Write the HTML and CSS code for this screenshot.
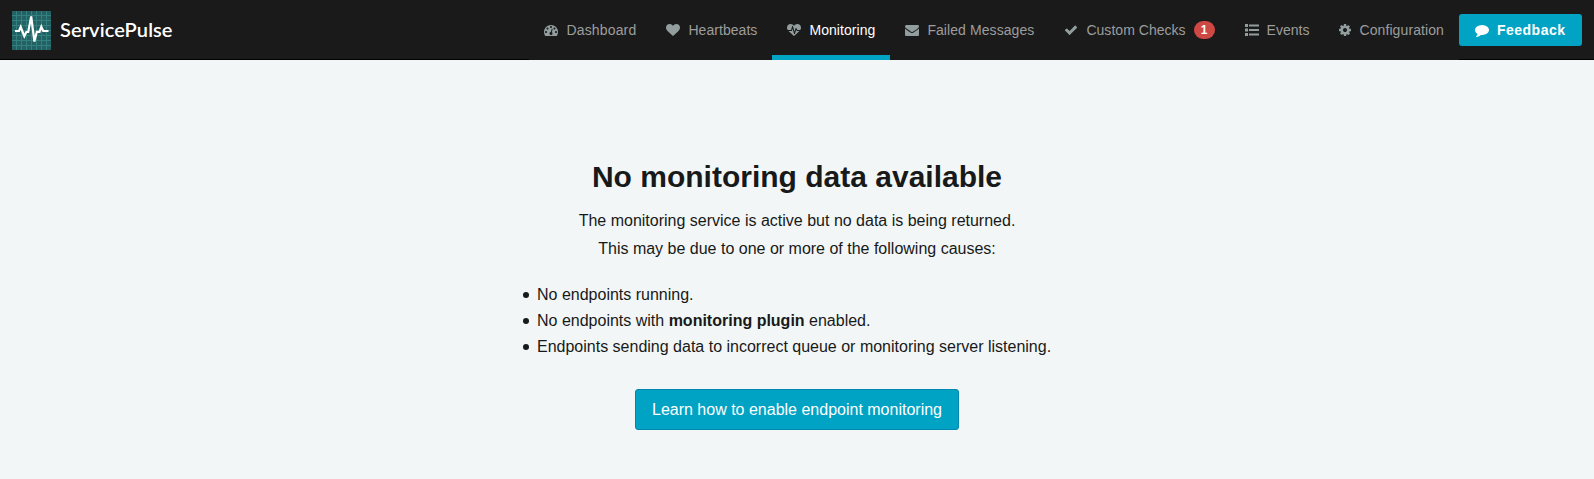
FILE: index.html
```html
<!DOCTYPE html>
<html lang="en">
<head>
<meta charset="utf-8">
<title>ServicePulse</title>
<link rel="stylesheet" href="styles.css">
</head>
<body>
<header class="navbar">
  <a class="brand">
    <svg class="logo" viewBox="0 0 39 39">
      <rect width="39" height="39" fill="#236164"/>
      <path d="M4.500 0V39M9.500 0V39M14.500 0V39M19.500 0V39M24.500 0V39M29.500 0V39M34.500 0V39M0 4.500H39M0 9.500H39M0 14.500H39M0 19.500H39M0 24.500H39M0 29.500H39M0 34.500H39" stroke="#33817f" stroke-width="1"/>
      <path d="M3 20H7L8.700 16L12.300 25.200L14.300 21H16.200L19.200 5.500L22.400 30.500L24.800 20.800H27.500L29.300 15.700L31.200 20H36.500" fill="none" stroke="#fff" stroke-width="2.200"/>
    </svg>
    <span class="brand-name">ServicePulse</span>
  </a>
  <nav class="menu">
    <a class="item dashboard"><svg class="icon" viewBox="0 0 1792 1792"><path d="M384 1152q0-53-37.500-90.500t-90.500-37.500-90.500 37.500-37.500 90.500 37.500 90.500 90.500 37.500 90.500-37.500 37.500-90.500zm192-448q0-53-37.500-90.500t-90.500-37.500-90.500 37.500-37.500 90.500 37.500 90.500 90.500 37.500 90.500-37.500 37.500-90.500zm428 481l101-382q6-26-7.500-48.500t-38.500-29.500-48 6.500-30 39.500l-101 382q-60 5-107 43.500t-63 98.500q-20 77 20 146t117 89 146-20 89-117q16-60-6-117t-72-91zm660-33q0-53-37.500-90.500t-90.500-37.500-90.500 37.500-37.500 90.500 37.500 90.500 90.500 37.500 90.500-37.500 37.500-90.500zm-640-640q0-53-37.500-90.500t-90.500-37.500-90.500 37.500-37.500 90.500 37.500 90.500 90.500 37.500 90.500-37.500 37.500-90.500zm448 192q0-53-37.500-90.500t-90.500-37.500-90.500 37.500-37.500 90.500 37.500 90.500 90.500 37.500 90.500-37.500 37.500-90.500zm320 448q0 261-141 483-19 29-54 29h-1402q-35 0-54-29-141-221-141-483 0-182 71-348t191-286 286-191 348-71 348 71 286 191 191 286 71 348z"/></svg>Dashboard</a>
    <a class="item heartbeats"><svg class="icon" viewBox="0 0 1792 1792"><path d="M896 1664q-26 0-44-18l-624-602q-10-8-27.500-26t-55.500-65.500-68-97.500-53.500-121-23.500-138q0-220 127-344t351-124q62 0 126.500 21.500t120 58 95.500 68.500 76 68q36-36 76-68t95.500-68.500 120-58 126.500-21.500q224 0 351 124t127 344q0 221-229 450l-623 600q-18 18-44 18z"/></svg>Heartbeats</a>
    <a class="item active monitoring"><svg class="icon" viewBox="0 0 1792 1792"><path d="M1280 1024h305q-5 6-10 10.500t-9 7.500l-3 4-623 600q-18 18-44 18t-44-18l-624-602q-5-2-21-20h369q22 0 39.500-13.500t22.500-34.500l70-281 190 667q6 20 23 33t39 13q21 0 38-13t23-33l146-485 56 112q18 35 57 35zm512-428q0 145-103 300h-369l-111-221q-8-17-25.500-27t-36.500-8q-45 5-56 46l-129 430-196-686q-6-20-23.500-33t-39.500-13-39 13.500-22 34.500l-116 464h-423q-103-155-103-300 0-220 127-344t351-124q62 0 126.500 21.500t120 58 95.500 68.500 76 68q36-36 76-68t95.500-68.500 120-58 126.500-21.500q224 0 351 124t127 344z"/></svg>Monitoring</a>
    <a class="item failed"><svg class="icon" viewBox="0 0 1792 1792"><path d="M1792 710v794q0 66-47 113t-113 47h-1472q-66 0-113-47t-47-113v-794q44 49 101 87 362 246 497 345 57 42 92.500 65.500t94.500 48 110 24.500h2q51 0 110-24.500t94.500-48 92.500-65.500q170-123 498-345 57-39 100-87zm0-294q0 79-49 151t-122 123q-376 261-468 325-10 7-42.500 31t-54 38.500-52 32.500-57.500 27-50 9h-2q-23 0-50-9t-57.500-27-52-32.500-54-38.500-42.500-31q-91-64-262-182.500t-205-142.500q-62-42-117-115.500t-55-136.500q0-78 41.500-130t118.500-52h1472q65 0 112.500 47t47.500 113z"/></svg>Failed Messages</a>
    <a class="item checks"><svg class="icon" viewBox="0 0 1792 1792"><path d="M1671 566q0 40-28 68l-724 724-136 136q-28 28-68 28t-68-28l-136-136-362-362q-28-28-28-68t28-68l136-136q28-28 68-28t68 28l294 295 656-657q28-28 68-28t68 28l136 136q28 28 28 68z"/></svg>Custom Checks<span class="badge">1</span></a>
    <a class="item"><svg class="icon" viewBox="0 0 14 14"><path d="M0 1h3v3H0zM0 5.500h3v3H0zM0 10h3v3H0zM4 1.500h10v2H4zM4 6h10v2H4zM4 10.500h10v2H4z"/></svg>Events</a>
    <a class="item configuration"><svg class="icon icon-narrow" viewBox="128 0 1536 1792"><path d="M1152 896q0-106-75-181t-181-75-181 75-75 181 75 181 181 75 181-75 75-181zm512-109v222q0 12-8 23t-20 13l-185 28q-19 54-39 91 35 50 107 138 10 12 10 25t-9 23q-27 37-99 108t-94 71q-12 0-26-9l-138-108q-44 23-91 38-16 136-29 186-7 28-36 28h-222q-14 0-24.500-8.500t-11.500-21.500l-28-184q-49-16-90-37l-141 107q-10 9-25 9-14 0-25-11-126-114-165-168-7-10-7-23 0-12 8-23 15-21 51-66.500t54-70.500q-27-50-41-99l-183-27q-13-2-21-12.500t-8-23.500v-222q0-12 8-23t19-13l186-28q14-46 39-92-40-57-107-138-10-12-10-24 0-10 9-23 26-36 98.500-107.500t94.500-71.500q13 0 26 10l138 107q44-23 91-38 16-136 29-186 7-28 36-28h222q14 0 24.500 8.500t11.500 21.500l28 184q49 16 90 37l142-107q9-9 24-9 13 0 25 10 129 119 165 170 7 8 7 22 0 12-8 23-15 21-51 66.500t-54 70.500q26 50 41 98l183 28q13 2 21 12.500t8 23.500z"/></svg>Configuration</a>
    <a class="feedback"><svg class="icon" viewBox="0 0 1792 1792"><path d="M1792 896q0 174-120 321.500t-326 233-450 85.500q-70 0-145-8-198 175-460 242-49 14-114 22-17 2-30.500-9t-17.500-29v-1q-3-4-.5-12t2-10 4.500-9.500l6-9 7-8.500 8-9q7-8 31-34.500t34.500-38 31-39.500 32.500-51 27-59 26-76q-157-89-247.500-220t-90.500-281q0-130 71-248.500t191-204.500 286-136.500 348-50.500q244 0 450 85.500t326 233 120 321.500z"/></svg>Feedback</a>
  </nav>
</header>
<main class="empty">
  <h1 class="title">No monitoring data available</h1>
  <p class="lead">The monitoring service is active but no data is being returned.</p>
  <p class="lead">This may be due to one or more of the following causes:</p>
  <ul class="causes">
    <li>No endpoints running.</li>
    <li>No endpoints with <b>monitoring plugin</b> enabled.</li>
    <li>Endpoints sending data to incorrect queue or monitoring server listening.</li>
  </ul>
  <a class="learn">Learn how to enable endpoint monitoring</a>
</main>
</body>
</html>
```
FILE: styles.css
```css
* { box-sizing: border-box; }
body {
  margin: 0;
  background: #f2f6f7;
  color: #181919;
  font: 16px/26px "Liberation Sans", Arial, sans-serif;
}
.navbar {
  display: flex;
  justify-content: space-between;
  height: 60px;
  padding: 0 12px;
  background: #1a1a1a;
  border-bottom: 1px solid #000;
}
.brand { display: flex; align-items: center; gap: 9px; height: 60px; }
.logo { width: 39px; height: 39px; }
.brand-name {
  margin-top: -3px;
  color: #fff;
  font: 600 20px/24px Lato, sans-serif;
  letter-spacing: 0.08px;
}
.menu { display: flex; height: 60px; font-size: 14px; line-height: 20px; }
.item {
  display: flex;
  align-items: center;
  height: 60px;
  padding: 0 15px;
  color: #9d9d9d;
  background: #1a1a1a;
  white-space: nowrap;
}
.icon {
  width: 14px;
  height: 14px;
  margin-right: 8px;
  fill: #929e9e;
}
.icon-narrow { width: 12px; }
.dashboard { letter-spacing: 0.17px; }
.heartbeats { letter-spacing: 0.05px; }
.monitoring { letter-spacing: 0.06px; }
.failed { letter-spacing: 0.08px; }
.checks { letter-spacing: 0.03px; }
.configuration { letter-spacing: 0.1px; }
.active { color: #fff; box-shadow: inset 0 -5px #00a3c4; }
.badge {
  margin-left: 8px;
  width: 21px;
  height: 18px;
  border-radius: 9px;
  background: #ce4844;
  color: #fff;
  font-size: 12px;
  font-weight: 700;
  line-height: 18px;
  text-align: center;
}
.feedback {
  display: flex;
  align-items: center;
  align-self: flex-start;
  width: 123px;
  height: 32px;
  margin-top: 14px;
  padding: 0 16px;
  border-radius: 3px;
  background: #00a3c4;
  color: #fff;
  font-weight: 700;
  letter-spacing: 0.48px;
}
.feedback .icon { fill: #fff; }
.empty {
  display: flex;
  flex-direction: column;
  align-items: center;
  padding-top: 99px;
}
.title { margin: 0 0 13px; font-size: 30px; line-height: 36px; }
.lead { margin: 0 0 2px; }
.causes {
  width: 534px;
  margin: 18px 0 29px;
  padding: 0;
  list-style: none;
}
.causes li { display: flex; align-items: center; white-space: pre; margin-left: -7px; }
.causes li::before {
  content: "";
  width: 6px;
  height: 6px;
  margin: 0 8px 1px 0;
  border-radius: 50%;
  background: #181919;
}
.learn {
  height: 41px;
  padding: 0 16px;
  border: 1px solid #0087ad;
  border-radius: 3px;
  background: #00a3c4;
  color: #fff;
  line-height: 39px;
}
```
